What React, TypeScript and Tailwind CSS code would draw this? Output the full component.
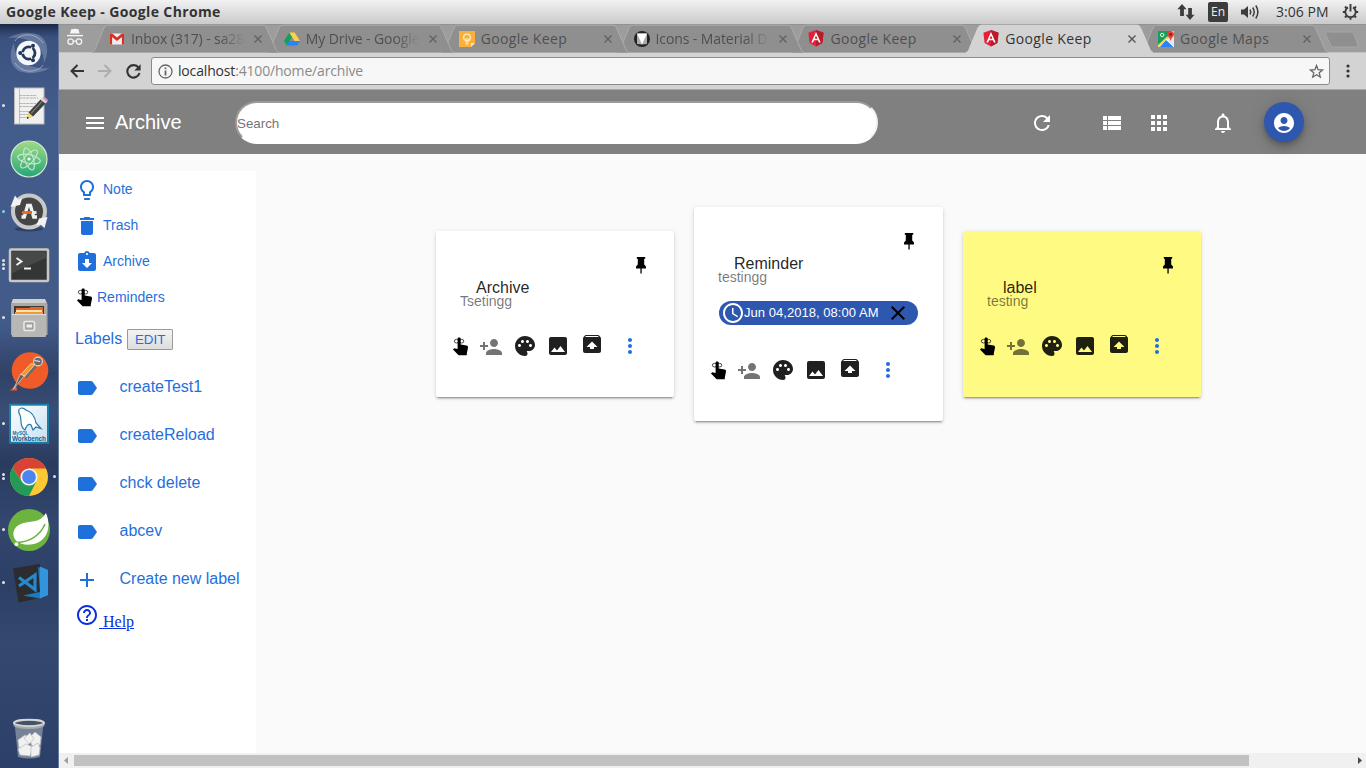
import React from "react";
import {
  MdAccessTime,
  MdAccountCircle,
  MdAdd,
  MdApps,
  MdAssignmentReturned,
  MdClose,
  MdDelete,
  MdHelpOutline,
  MdImage,
  MdLabel,
  MdLightbulbOutline,
  MdMenu,
  MdMoreVert,
  MdNotificationsNone,
  MdPalette,
  MdPersonAdd,
  MdRefresh,
  MdUnarchive,
  MdViewList,
} from "react-icons/md";

/* ---------- small drawings ---------- */

function FingerIcon() {
  return (
    <svg width="16" height="19" viewBox="0 0 16 19" className="shrink-0">
      <ellipse cx="3.6" cy="4.2" rx="2.3" ry="1.8" fill="none" stroke="#333" strokeWidth=".9" />
      <ellipse cx="8.600" cy="4.2" rx="2.2" ry="1.8" fill="none" stroke="#333" strokeWidth=".9" />
      <path
        fill="#000"
        d="M4.600 1.6C4.600.2 7.700.2 7.700 1.6V7.4L13.600 8.600C14.800 9 15.200 9.800 15 10.800L13.800 16.600V18.300H5.600L0 12.400 1.200 11.200 4.600 12Z"
      />
    </svg>
  );
}

function PinIcon() {
  return (
    <svg width="10" height="17" viewBox="0 0 10 17" className="block">
      <path fill="#000" d="M.8 0H9.2V1.8H8.2V7.6L10 9.6V11.4H5.7V16.5H4.4V11.4H0V9.6L1.8 7.6V1.8H.8Z" />
    </svg>
  );
}

function AngularIcon() {
  return (
    <svg width="16" height="17" viewBox="0 0 16 17">
      <path fill="#e0233a" d="M8 0 15.6 2.7 14.4 12.9 8 16.5 1.6 12.9.4 2.7Z" />
      <path fill="#b81c2c" d="M8 0 15.6 2.7 14.4 12.9 8 16.5Z" />
      <path fill="#fff" fillRule="evenodd" d="M8 2 12.7 12.6H10.9L10 10.3H6L5.1 12.6H3.3ZM8 5.4 6.6 8.8H9.4Z" />
    </svg>
  );
}

function GmailIcon() {
  return (
    <svg width="16" height="16" viewBox="0 0 16 16">
      <path fill="#eee" d="M1 2.5H15V13.5H1Z" />
      <path fill="#d93025" d="M1 2.5H3.2L8 6.6 12.8 2.5H15V13.5H12.9V6L8 9.9 3.1 6V13.5H1Z" />
    </svg>
  );
}

function DriveIcon() {
  return (
    <svg width="16" height="16" viewBox="0 0 16 16">
      <path fill="#12a05c" d="M5.3 1.5 8 6.2 2.7 14.5 0 9.9Z" />
      <path fill="#ffcf48" d="M5.3 1.5H10.7L16 9.9H10.6Z" />
      <path fill="#2684fc" d="M5.4 9.9H16L13.3 14.5H2.7Z" />
    </svg>
  );
}

function KeepIcon() {
  return (
    <svg width="16" height="16" viewBox="0 0 16 16">
      <path fill="#fbb03b" d="M0 0H16V12L12 16H0Z" />
      <path fill="#ffe3a6" d="M16 12H12V16Z" />
      <circle cx="8" cy="6.5" r="3.4" fill="none" stroke="#fff0c8" strokeWidth="1.2" />
      <path stroke="#fff0c8" strokeWidth="1.2" fill="none" d="M6.3 11H9.7M6.7 12.8H9.3M7 9.8V7.3M9 9.8V7.3" />
    </svg>
  );
}

function MaterialIcon() {
  return (
    <svg width="16" height="16" viewBox="0 0 16 16">
      <circle cx="8" cy="8" r="8" fill="#222" />
      <path fill="#aaa" d="M3 2.6V13L8 13.4 13 13V2.6Z" />
      <path fill="#fff" d="M3 2.6H13L8 13.4Z" />
    </svg>
  );
}

function MapsIcon() {
  return (
    <svg width="16" height="16" viewBox="0 0 16 16">
      <rect width="16" height="16" rx="1" fill="#e8e8e8" />
      <path fill="#1a9f5a" d="M0 0H12L12 4 0 15Z" />
      <path fill="#2b83f6" d="M8 9 15.5 16H2Z" />
      <path stroke="#ffd04c" strokeWidth="2" d="M0 15.5 10 6" />
      <path stroke="#fff" strokeWidth="1" d="M8 8 16 16" />
      <circle cx="4.2" cy="4" r="1.7" fill="none" stroke="#fff" strokeWidth=".9" />
      <path fill="#e4443a" d="M12.6 0C14.8 0 16 1.6 16 3.4 16 5.6 12.9 7 12.7 10.4 12.3 7 9.3 5.6 9.3 3.4 9.3 1.6 10.5 0 12.6 0Z" />
      <circle cx="12.6" cy="3.4" r="1.3" fill="#7c1d18" />
    </svg>
  );
}

/* ---------- launcher ---------- */

const dashIcon = (
  <svg width="44" height="44" viewBox="0 0 44 44">
    <path fill="#9fb0cc" fillOpacity=".4" d="M1 7C10 2 22 0 32 4 42 10 42 22 37 32 37 14 22 5 1 7Z" />
    <path fill="#9fb0cc" fillOpacity=".4" d="M43 37C34 42 22 44 12 40 2 34 2 22 7 12 7 30 22 39 43 37Z" />
    <path fill="none" stroke="#c7d2e4" strokeOpacity=".6" d="M8 10C12 3 28 0 36 12M36 34C32 41 16 44 8 32" />
    <circle cx="21.5" cy="22" r="12.2" fill="#f5f7fa" />
    <circle cx="21.8" cy="22" r="6.2" fill="none" stroke="#26385c" strokeWidth="2.8" />
    <path stroke="#f5f7fa" strokeWidth="1.4" d="M21.8 22H11M21.8 22 27.5 12M21.8 22 27.5 32" />
    <g fill="#26385c">
      <circle cx="13.2" cy="22" r="2" />
      <circle cx="26" cy="14.8" r="2" />
      <circle cx="26" cy="29.2" r="2" />
    </g>
  </svg>
);

const editorIcon = (
  <svg width="44" height="44" viewBox="0 0 44 44">
    <rect x="7.5" y="4" width="29.5" height="36" fill="#f0f0ee" stroke="#bbb" />
    <path stroke="#dda0a0" strokeWidth=".8" d="M12.5 4.5V39.5" />
    <path stroke="#b4b4b4" strokeWidth="1" strokeDasharray="3 .6" d="M12 11.5H29M12 14H31M12 19.500H29M12 22.500H28M12 27.500H23M12 30.500H22M12 33.500H20" />
    <path fill="#f2d675" d="M20 35 21.5 28.5 26 32.5Z" />
    <path fill="#111" d="M20 35 20.5 32.5 22 34Z" />
    <path fill="#3f4141" d="M21.5 28.5 33.5 15.5 38.5 19.5 26 32.5Z" />
    <path stroke="#777" strokeWidth="1.2" d="M24 29.5 35.5 17" />
    <path fill="#d8d8d8" d="M33.5 15.5 35.5 13.5 40.2 17.7 38.5 19.5Z" />
    <path fill="#e48bb9" d="M35.5 13.5C37 12.5 41.5 14.5 40.8 17.2L40.2 17.7Z" />
  </svg>
);

const atomIcon = (
  <svg width="44" height="44" viewBox="0 0 44 44">
    <defs>
      <linearGradient id="atom" x1="0" y1="0" x2="0" y2="1">
        <stop offset="0" stopColor="#a1da87" />
        <stop offset="1" stopColor="#25a778" />
      </linearGradient>
    </defs>
    <circle cx="22" cy="22" r="18" fill="url(#atom)" stroke="#d2e9d6" strokeWidth="1.2" />
    <g fill="none" stroke="#c4ebcd" strokeWidth="1.1">
      <ellipse cx="22" cy="22" rx="11.5" ry="4.3" transform="rotate(12 22 22)" />
      <ellipse cx="22" cy="22" rx="11.5" ry="4.3" transform="rotate(72 22 22)" />
      <ellipse cx="22" cy="22" rx="11.5" ry="4.3" transform="rotate(132 22 22)" />
    </g>
    <circle cx="22" cy="22" r="1.6" fill="#fff" />
  </svg>
);

const updaterIcon = (
  <svg width="44" height="44" viewBox="0 0 44 44">
    <ellipse cx="22" cy="39" rx="14" ry="2.5" fill="#1a2744" fillOpacity=".5" />
    <circle cx="22" cy="21.5" r="16" fill="#454545" stroke="#c9c9c9" strokeWidth="4" />
    <path fill="#f2f2f2" d="M3.500 17 8 5.5 11 9.5 15 8.5 13 15Z" />
    <path fill="#f2f2f2" d="M40.500 27 37.5 38 33.500 34.5 29.5 35.5 32 28.5Z" />
    <path fill="none" stroke="#f1f1f1" strokeWidth="3.400" d="M17 28 20.6 15.5H23.4L27 28M14.500 27H18.6M25.4 27H30" />
    <path stroke="#ee6426" strokeWidth="2.800" d="M15 22.500H25" />
    <path stroke="#f1f1f1" strokeWidth="2.800" d="M25 22.500H29.5" />
  </svg>
);

const terminalIcon = (
  <svg width="44" height="44" viewBox="0 0 44 44">
    <rect x="3" y="6.5" width="38" height="31.5" rx="1" fill="#343636" stroke="#c9c8c4" strokeWidth="2.5" />
    <path fill="#474949" d="M5 8.5H39V15L5 30Z" />
    <path fill="none" stroke="#f2f2f2" strokeWidth="1.9" d="M9.500 15 14.5 18.500 9.500 22M17 25.5H24" />
  </svg>
);

const filesIcon = (
  <svg width="44" height="44" viewBox="0 0 44 44">
    <path fill="#a9a9a7" d="M6 3H38L40.5 8V39H4V8Z" />
    <path fill="#d0d0ce" d="M6 3H38L39.5 7H4.5Z" />
    <path fill="#3f3a35" d="M7 10H37V19H7Z" />
    <path fill="#e56620" d="M9 12H22L24 11H36V19H9Z" />
    <path fill="#f7dfb6" d="M9 14H35V19H9Z" />
    <path fill="#ef9a3b" d="M8 16H36V19H8Z" />
    <rect x="5" y="18" width="34" height="23" rx="1" fill="#b7b7b5" />
    <path stroke="#dedede" d="M5 18.5H39" />
    <rect x="17" y="25.5" width="10.5" height="9" rx="1.5" fill="#a5a5a3" stroke="#e9e9e9" strokeWidth="1.6" />
    <rect x="19.5" y="28.5" width="5.5" height="3" fill="#eee" />
  </svg>
);

const postmanIcon = (
  <svg width="44" height="44" viewBox="0 0 44 44">
    <circle cx="23" cy="21.5" r="18.3" fill="#f15a29" />
    <path fill="#f15a29" d="M3 41.5 9 36 10 41.5Z" />
    <path fill="#5d5d5d" stroke="#d0c4bc" strokeWidth=".9" d="M6.500 40 13.500 25 17.500 26.500 13 32Z" />
    <path fill="#f7941e" stroke="#ffd9b8" strokeWidth=".8" d="M14 25.500 24 14.500 28 15.500 18 27Z" />
    <path stroke="#6d6d6d" strokeWidth="3" d="M18.500 28.500 28.500 17" />
    <path stroke="#d9cfc8" strokeWidth=".9" d="M17 28 27.500 16" />
    <circle cx="31" cy="12.5" r="4.4" fill="#6b6b6b" stroke="#dcd5d0" strokeWidth="1.1" />
    <path stroke="#eee" strokeWidth="1.200" d="M27.500 11.500 33 12.500" />
  </svg>
);

const workbenchIcon = (
  <svg width="44" height="44" viewBox="0 0 44 44">
    <defs>
      <linearGradient id="wb" x1="0" y1="0" x2="1" y2="1">
        <stop offset="0" stopColor="#fff" />
        <stop offset="1" stopColor="#c4dff0" />
      </linearGradient>
    </defs>
    <rect x="3" y="2.700" width="38" height="38" fill="url(#wb)" stroke="#177fa8" strokeWidth="2" />
    <path
      fill="#fff"
      stroke="#2878a8"
      strokeWidth="1.2"
      d="M12 7.500C14 5 17 6 19 8 25 10 28 15 29 21L34 26.500 29 25 26 28 24 23C21 21 19 25 18 28 12 25 15 17 13 13 12 11 11 10 12 7.500Z"
    />
    <text x="5.5" y="33" fontSize="4.6" fontWeight="bold" fill="#1a6e99" fontFamily="Liberation Sans, sans-serif">
      MySQL
    </text>
    <text x="5" y="38.6" fontSize="6.4" fontWeight="bold" fill="#0d5f8c" textLength="34" fontFamily="Liberation Sans, sans-serif">
      Workbench
    </text>
  </svg>
);

const chromeIcon = (
  <svg width="44" height="44" viewBox="0 0 44 44">
    <circle cx="22" cy="22" r="19" fill="#fcc934" />
    <path fill="#d94335" d="M5.5 12.5A19 19 0 0 1 38.5 12.5L38.8 13.5H22V22L14.6 26.2Z" />
    <path fill="#249a57" d="M5.5 12.5A19 19 0 0 0 22 41L29.4 26.2 22 30.5 14.6 26.2Z" />
    <circle cx="22" cy="22" r="8.6" fill="#f4f4f4" />
    <circle cx="22" cy="22" r="6.9" fill="#4a86ee" />
  </svg>
);

const springIcon = (
  <svg width="44" height="44" viewBox="0 0 44 44">
    <circle cx="22" cy="22" r="21" fill="#6db33f" />
    <path fill="#fff" d="M39 5C45 19 40 35 24 36.5 18 37 13 36 10 33.5 3 27 7 18 15 15.5 25 12.5 33 15 39 5Z" />
    <path fill="none" stroke="#6db33f" strokeWidth="1.6" d="M10 34.5C22 34 33 28 38 16" />
    <circle cx="9.3" cy="36.2" r="1.9" fill="#fff" />
  </svg>
);

const codeIcon = (
  <svg width="44" height="44" viewBox="0 0 44 44">
    <path fill="#2c2c2e" d="M6 7.5 33 3 38 36 11.5 41.5Z" />
    <path fill="#1b7ac0" d="M31 6 41 9V34L33 37.5 16 34.5 33 31Z" />
    <path fill="#3294dc" d="M33 5.5 41 9V34L33 37.5Z" />
    <path fill="#2c2c2e" d="M31 12V30L23 24Z" />
    <path fill="none" stroke="#2689ce" strokeWidth="3.2" d="M12 16.5 28 28.5V14L12 25" />
  </svg>
);

const trashIcon = (
  <svg width="44" height="44" viewBox="0 0 44 44">
    <path fill="#8d99a8" fillOpacity=".75" d="M7.5 6H36.5L33 40Q22 43 11 40Z" />
    <g fill="#f1f1f1" stroke="#b9bcbc" strokeWidth=".7">
      <path d="M11 23 18 18 24 22 20 30 12 31Z" />
      <path d="M22 21 28 15 34 20 33 28 25 29Z" />
      <path d="M11 32 19 27 26 30 23 39 13 38Z" />
      <path d="M24 30 31 26 33 31 32 38 24 40Z" />
      <path d="M17 21 23 16 27 22 22 27Z" />
    </g>
    <ellipse cx="22" cy="6" rx="15" ry="3.3" fill="#45536a" stroke="#d7d8d6" strokeWidth="2" />
    <path fill="none" stroke="#a8aba9" strokeWidth="2" d="M7 8C12 12 32 12 37 8" />
  </svg>
);

const launcher: { icon: React.ReactNode; pips: number; cyan?: boolean; active?: boolean }[] = [
  { icon: dashIcon, pips: 0 },
  { icon: editorIcon, pips: 1 },
  { icon: atomIcon, pips: 0 },
  { icon: updaterIcon, pips: 1, cyan: true },
  { icon: terminalIcon, pips: 3 },
  { icon: filesIcon, pips: 1 },
  { icon: postmanIcon, pips: 0 },
  { icon: workbenchIcon, pips: 1 },
  { icon: chromeIcon, pips: 2, active: true },
  { icon: springIcon, pips: 1 },
  { icon: codeIcon, pips: 1 },
];

function Launcher() {
  return (
    <aside className="flex w-[59px] shrink-0 flex-col border-r border-[#647a9c] bg-[linear-gradient(to_bottom,#1a2846_0px,#2c4067_7px,#3b527f_14px,#425c8b_90px,#425b89_300px,#2f4266_350px,#3a4f78_390px,#293b5e_440px,#33476f_500px,#2c3f65_560px,#35496f_620px,#2c3f68_744px)] pt-[2px]">
      {launcher.map((item, i) => (
        <div key={i} className="flex h-[53px] shrink-0 items-center">
          <div className="flex w-[7px] flex-col items-center">
            {Array.from({ length: item.pips }, (_, k) => (
              <span key={k} className="flex h-1 items-center">
                <span className={item.cyan ? "size-[3.500px] rounded-full bg-[#7fd0f2]" : "size-[3.500px] rounded-full bg-[#dfe2e9]"} />
              </span>
            ))}
          </div>
          {item.icon}
          {item.active && <span className="ml-[1.500px] size-[3.500px] rounded-full bg-[#dfe2e9]" />}
        </div>
      ))}
      <div className="mt-auto pb-[7px] pl-[7px]">{trashIcon}</div>
    </aside>
  );
}

/* ---------- desktop bar ---------- */

function SystemBar() {
  return (
    <div className="flex h-6 shrink-0 items-center bg-linear-to-b from-[#f2f2f2] to-[#cacaca] pl-[6px] pr-[7px] text-[#333] [font-family:'Open_Sans','Noto_Sans',sans-serif]">
      <span className="text-[14px] font-bold leading-6 tracking-[0.37px]">Google Keep - Google Chrome</span>
      <div className="ml-auto flex items-center">
        <svg width="18" height="16" viewBox="0 0 18 16" fill="#3c3c3c">
          <path d="M5 0 9.6 5.2H6.9V12H3.1V5.2H.4ZM13 16 8.6 10.8H11.2V4H14.9V10.8H17.5Z" />
        </svg>
        <span className="ml-[13px] flex h-5 w-5 items-center justify-center rounded-[2px] bg-[#3c3c3c] text-[12px] text-[#eee]">En</span>
        <svg width="21" height="18" viewBox="0 0 21 18" className="ml-3">
          <path fill="#3c3c3c" d="M1 6.5H4L8 3V15L4 11.5H1Z" />
          <path fill="none" stroke="#3c3c3c" strokeWidth="1.5" d="M10 6.5Q11.6 9 10 11.5M12.7 4.5Q15.7 9 12.7 13.5M15.8 2.5Q20 9 15.8 15.5" />
        </svg>
        <span className="ml-[15px] w-[53px] whitespace-nowrap text-[14px] leading-6 tracking-[0.05px]">3:06 PM</span>
        <svg width="17" height="18" viewBox="0 0 17 18" className="ml-[13px]">
          <path fill="none" stroke="#3c3c3c" strokeWidth="1.9" d="M6 4.4A5.2 5.2 0 1 0 11 4.4M8.5 1V8.5" />
          <path stroke="#3c3c3c" strokeWidth="2" d="M.8 9H3M14 9H16.2M3 3.5 4.6 5.1M14 3.5 12.4 5.1M3 14.5 4.6 12.9M14 14.5 12.4 12.9M8.5 14.5V16.8" />
        </svg>
      </div>
    </div>
  );
}

/* ---------- browser chrome ---------- */

const tabs: { title: string; icon: React.ReactNode; active?: boolean; fade?: boolean; z: string }[] = [
  { title: "Inbox (317) - sa28", icon: <GmailIcon />, fade: true, z: "z-[6]" },
  { title: "My Drive - Google", icon: <DriveIcon />, fade: true, z: "z-[5]" },
  { title: "Google Keep", icon: <KeepIcon />, z: "z-[4]" },
  { title: "Icons - Material D", icon: <MaterialIcon />, fade: true, z: "z-[3]" },
  { title: "Google Keep", icon: <AngularIcon />, z: "z-[2]" },
  { title: "Google Keep", icon: <AngularIcon />, active: true, z: "z-[7]" },
  { title: "Google Maps", icon: <MapsIcon />, z: "z-[1]" },
];

function CloseGlyph({ color }: { color: string }) {
  return (
    <svg width="8" height="8" viewBox="0 0 8 8">
      <path stroke={color} strokeWidth="1.4" d="M.5.5 7.5 7.5M7.5.5.5 7.5" />
    </svg>
  );
}

function TabStrip() {
  return (
    <div className="flex h-[29px] shrink-0 border-b border-[#c2c2c2] bg-[#9d9d9d] shadow-[inset_0_1px_0_#939393]">
      <svg width="18" height="18" viewBox="0 0 18 18" className="ml-[7px] mt-[4px]">
        <path fill="#f5f5f5" d="M5.2 1.2Q9 .2 12.4 1.2L13.6 5.6H4Z" />
        <path stroke="#f5f5f5" strokeWidth="1.4" d="M1 7.6H17" />
        <g fill="none" stroke="#f5f5f5" strokeWidth="1.3">
          <circle cx="4.6" cy="13.6" r="2.7" />
          <circle cx="13" cy="13.6" r="2.7" />
          <path d="M7.3 13.2H10.3" />
        </g>
      </svg>
      <div className="ml-[8px] flex">
        {tabs.map((t, i) => (
          <div key={i} className={`relative flex h-[29px] w-[174.850px] shrink-0 items-center pl-[17px] ${t.z}`}>
            <svg width="188" height="29" viewBox="0 0 188 29" className="absolute left-0 top-0">
              <path
                d="M0 28.5Q2 28 3 25.5L12 4Q13 1.2 15.5 1.2H171Q173.500 1.2 174.500 4L184 25.500Q185 28 187 28.500"
                fill={t.active ? "#d3d3d3" : "#8f8f8f"}
                stroke={t.active ? "#d9d9d9" : "#acacac"}
              />
              {t.active && <path d="M0 28.5H187" stroke="#d3d3d3" />}
            </svg>
            <span className="relative flex w-4 shrink-0 justify-center">{t.icon}</span>
            <span
              className={`relative ml-[6px] mt-[1px] w-[114px] overflow-hidden whitespace-nowrap text-[14px] leading-5 [font-family:'Open_Sans','Noto_Sans',sans-serif] ${
                t.active ? "text-[#333]" : "text-[#4f4f4f]"
              } ${t.fade ? "tracking-[-0.1px] [mask-image:linear-gradient(to_right,black_78%,transparent_100%)]" : "tracking-[0.35px]"}`}
            >
              {t.title}
            </span>
            <span className="relative ml-[9px] mt-[1px]">
              <CloseGlyph color={t.active ? "#555" : "#626262"} />
            </span>
          </div>
        ))}
      </div>
      <svg width="36" height="18" viewBox="0 0 36 18" className="ml-[8px] mt-[7px] shrink-0">
        <path d="M3 1H27.500Q29 1 29.700 2.600L34 14Q34.500 16 33 16H9Q7.500 16 6.800 14.500L1.500 3Q1 1 3 1Z" fill="#8f8f8f" stroke="#a6a6a6" />
      </svg>
    </div>
  );
}

function Toolbar() {
  return (
    <div className="flex h-[37px] shrink-0 items-center border-b border-[#a9a9a9] bg-[#d3d3d3] pl-[11px]">
      <svg width="14" height="14" viewBox="0 0 14 14">
        <path fill="none" stroke="#333" strokeWidth="2" d="M14 7H1.800M7.500 1 1.500 7 7.500 13" />
      </svg>
      <svg width="14" height="14" viewBox="0 0 14 14" className="ml-[14px]">
        <path fill="none" stroke="#adadad" strokeWidth="2" d="M0 7H12.200M6.500 1 12.500 7 6.500 13" />
      </svg>
      <svg width="15" height="15" viewBox="0 0 15 15" className="ml-[13.500px]">
        <path fill="none" stroke="#333" strokeWidth="2.100" d="M12.600 3.800A6.200 6.200 0 1 0 13.500 9" />
        <path fill="#333" d="M14.600.3V6.600H8.300Z" />
      </svg>
      <div className="ml-[10.500px] flex h-7 w-[1179px] items-center rounded-[3px] border border-[#8b8b8b] bg-[#f7f7f7] pl-[6px] pr-[5px]">
        <svg width="15" height="15" viewBox="0 0 15 15">
          <circle cx="7.500" cy="7.500" r="6.500" fill="none" stroke="#666" strokeWidth="1.300" />
          <path fill="#666" d="M6.600 3.500H8.400V5.200H6.600ZM6.600 6.500H8.400V11.500H6.600Z" />
        </svg>
        <span className="ml-[5px] text-[14px] leading-5 tracking-[-0.17px] text-[#8a8a8a] [font-family:'Open_Sans','Noto_Sans',sans-serif]">
          <span className="text-[#333]">localhost</span>:4100/home/archive
        </span>
        <svg width="15" height="15" viewBox="0 0 15 15" className="ml-auto">
          <path
            fill="none"
            stroke="#666"
            strokeWidth="1.300"
            d="M7.500 1.500 9.100 5.700 13.600 6 10.200 8.800 11.300 13.200 7.500 10.800 3.700 13.200 4.800 8.800 1.400 6 5.900 5.700Z"
          />
        </svg>
      </div>
      <svg width="4" height="14" viewBox="0 0 4 14" className="ml-[16px]" fill="#333">
        <circle cx="2" cy="2" r="1.600" />
        <circle cx="2" cy="7" r="1.600" />
        <circle cx="2" cy="12" r="1.600" />
      </svg>
    </div>
  );
}

/* ---------- application ---------- */

function AppHeader() {
  return (
    <header className="flex h-16 shrink-0 items-center bg-[#808080] pl-6 text-white">
      <MdMenu size={24} className="mt-[2px]" />
      <h1 className="ml-2 w-[120px] text-[20px] leading-6">Archive</h1>
      <input
        placeholder="Search"
        className="h-[43px] w-[643px] rounded-[22px] border-2 border-b-white border-l-[#9c9c9c] border-r-[#f2f2f2] border-t-[#9a9a9a] bg-white pt-[3px] text-[13.33px] placeholder:text-[#757575]"
      />
      <div className="mt-[2px] flex items-center">
        <MdRefresh size={24} className="ml-[151.500px]" />
        <MdViewList size={24} className="ml-[46px]" />
        <MdApps size={24} className="ml-[23px]" />
        <MdNotificationsNone size={24} className="ml-[40px]" />
      </div>
      <div className="ml-[29.500px] flex size-10 items-center justify-center rounded-full bg-[#2e57b0] shadow-[0_3px_5px_-1px_rgba(0,0,0,0.2),0_6px_10px_0_rgba(0,0,0,0.14),0_1px_18px_0_rgba(0,0,0,0.12)]">
        <MdAccountCircle size={24} className="mt-[1px]" />
      </div>
    </header>
  );
}

function SideNav() {
  const labels = ["createTest1", "createReload", "chck delete", "abcev"];
  return (
    <nav className="mt-[17px] flex w-[197px] shrink-0 flex-col bg-white pl-4 text-[#1f6fdc]">
      <a className="flex h-9 items-center gap-1 text-[14px]">
        <MdLightbulbOutline size={24} className="mt-[2px]" />
        Note
      </a>
      <a className="flex h-9 items-center gap-1 text-[14px]">
        <MdDelete size={24} className="mt-[2px]" />
        Trash
      </a>
      <a className="flex h-9 items-center gap-1 text-[14px]">
        <MdAssignmentReturned size={24} className="mt-[1px]" />
        Archive
      </a>
      <a className="flex h-9 items-center gap-[4px] pl-[2px] text-[14px]">
        <FingerIcon />
        Reminders
      </a>
      <div className="flex h-12 items-center text-[16px]">
        Labels
        <button className="ml-[5px] mt-px h-[21px] w-[46px] rounded-[1px] border border-[#9a9a9a] bg-linear-to-b from-[#f3f3f3] to-[#dedede] text-[13.33px] leading-none">
          EDIT
        </button>
      </div>
      {labels.map((l) => (
        <a key={l} className="flex h-12 items-center text-[16px]">
          <MdLabel size={24} className="mr-[20.5px] mt-[2px]" />
          {l}
        </a>
      ))}
      <a className="flex h-12 items-center whitespace-nowrap text-[16px]">
        <MdAdd size={24} className="mr-[20.5px] mt-[2px]" />
        Create new label
      </a>
      <a className="flex text-[16px] text-[#0a2fe0] [font-family:'Liberation_Serif',serif]">
        <MdHelpOutline size={24} />
        <span className="mt-[7px] whitespace-pre underline"> Help</span>
      </a>
    </nav>
  );
}

function NoteCard({ title, text, reminder, className }: { title: string; text: string; reminder?: string; className: string }) {
  return (
    <article
      className={`flex shrink-0 flex-col rounded-[2px] pb-[39px] pt-[26px] shadow-[0_3px_1px_-2px_rgba(0,0,0,0.2),0_2px_2px_0_rgba(0,0,0,0.14),0_1px_5px_0_rgba(0,0,0,0.12)] ${className}`}
    >
      <div className={reminder ? "flex justify-end pr-[29px]" : "flex justify-end pr-[28px]"}>
        <PinIcon />
      </div>
      <h2 className="mt-[6px] pl-10 text-[16px] leading-[16px] text-black/87">{title}</h2>
      <p className="-mt-[2px] pl-6 text-[14px] leading-[14px] text-black/54">{text}</p>
      {reminder && (
        <div className="ml-[25px] mt-[17px] flex h-6 w-[199px] shrink-0 items-center rounded-full bg-[#2e57b0] pl-[2px] text-[13px] text-white">
          <MdAccessTime size={24} className="shrink-0" />
          <span className="ml-[-1px] whitespace-nowrap tracking-[0.04px]">{reminder}</span>
          <MdClose size={24} color="#000" className="ml-auto mr-[8px] shrink-0" />
        </div>
      )}
      <div className="mt-auto flex h-6 items-center pl-[17px]">
        <FingerIcon />
        <MdPersonAdd size={24} className="ml-[10px] mt-[2px] opacity-54" />
        <MdPalette size={24} className="ml-[10px] opacity-87" />
        <MdImage size={24} className="ml-[9px] opacity-87" />
        <MdUnarchive size={24} className="ml-[10px] mt-[-4px] opacity-87" />
        <MdMoreVert size={24} color="#1f6fdc" className="ml-[14px]" />
      </div>
    </article>
  );
}

function HorizontalScrollbar() {
  return (
    <div className="flex h-[15px] shrink-0 items-center bg-[#f0f0f0] pl-[5px] pr-[4px]">
      <svg width="4" height="7" viewBox="0 0 4 7">
        <path fill="#a0a0a0" d="M4 0V7L0 3.500Z" />
      </svg>
      <div className="ml-[6px] h-[11px] w-[1175px] bg-[#c1c1c1]" />
      <svg width="4" height="7" viewBox="0 0 4 7" className="ml-auto">
        <path fill="#4c4c4c" d="M0 0V7L4 3.500Z" />
      </svg>
    </div>
  );
}

export default function App() {
  return (
    <div className="flex h-[768px] w-[1366px] flex-col overflow-hidden bg-[#fafafa] [font-family:'Liberation_Sans',Arial,sans-serif]">
      <SystemBar />
      <div className="flex min-h-0 flex-1">
        <Launcher />
        <div className="flex min-w-0 flex-1 flex-col">
          <TabStrip />
          <Toolbar />
          <AppHeader />
          <main className="flex min-h-0 flex-1">
            <SideNav />
            <section className="flex h-[320px] items-center gap-5 pl-[180px]">
              <NoteCard title="Archive" text="Tsetingg" className="h-[166px] w-[238px] bg-white" />
              <NoteCard title="Reminder" text="testingg" reminder="Jun 04,2018, 08:00 AM" className="h-[214px] w-[249px] bg-white" />
              <NoteCard title="label" text="testing" className="h-[166px] w-[238px] bg-[#fffb82]" />
            </section>
          </main>
          <HorizontalScrollbar />
        </div>
      </div>
    </div>
  );
}
